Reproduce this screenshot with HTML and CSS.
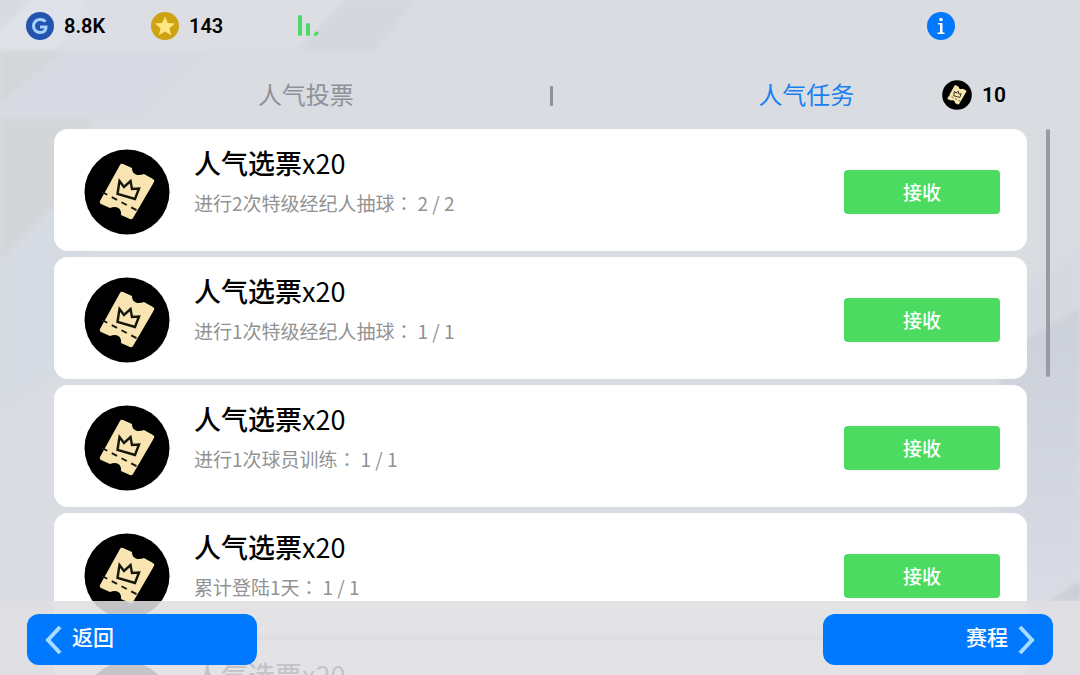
FILE: index.html
```html
<!DOCTYPE html>
<html lang="zh-CN">
<head>
<meta charset="utf-8">
<meta name="viewport" content="width=device-width, initial-scale=1">
<title>人气任务</title>
<link rel="stylesheet" href="styles.css">
</head>
<body>
<svg class="backdrop" viewBox="0 0 1080 675" preserveAspectRatio="none" aria-hidden="true">
  <defs>
    <linearGradient id="shade" x1="0" y1="0" x2="0" y2="1"><stop offset="0" stop-color="#ccd0d8"/><stop offset="1" stop-color="#d9dce4"/></linearGradient>
  </defs>
  <path fill="#e0e2e9" d="M0 0H88L55 50H0Z"/>
  <path fill="#d8dadf" d="M0 0H30L0 30Z"/>
  <path fill="#dcdee4" d="M88 0H345L297 50H55Z"/>
  <path fill="#d4d7dc" d="M345 0H415L375 50H297Z"/>
  <path fill="#d7dae2" d="M0 50H210L140 118H0Z"/>
  <path fill="#d4d6da" d="M0 50H60L0 105Z"/>
  <path fill="#d2d6d9" d="M0 119H90V170L0 260Z"/>
  <path fill="#d6dae2" d="M0 260L90 170V350L0 412Z"/>
  <path fill="#d6d9e0" d="M1080 250L1000 300V353L1080 308Z"/>
  <path fill="url(#shade)" d="M1080 308L1000 353V601H1080Z"/>
  <path fill="#cccfd5" d="M1080 580L1050 601H1080Z"/>
</svg>
<svg class="symbols" aria-hidden="true">
  <symbol id="ticket" viewBox="0 0 86 86">
    <circle cx="43" cy="43" r="42.500" fill="#000"/>
    <path fill="#f9e5b2" d="M39 15L48 19C48 24 52 28 60 25L69 30Q71 31 70 33L49 69Q48 71 46 70L37 66C38 60 33 56 26 59L17 55Q15 54 16 52L36 16Q37 14 39 15Z"/>
    <path fill="none" stroke="#17130d" stroke-width="2.400" d="M33.500 45L35.500 32L40 38L46.500 32L48 40L55 39.500L51 50Z"/>
    <path stroke="#17130d" stroke-width="1.800" stroke-dasharray="6 5" d="M18 43L56 63"/>
  </symbol>
</svg>

<header class="status">
  <div class="currency">
    <svg class="coin" viewBox="0 0 28 28" aria-hidden="true"><circle cx="14" cy="14" r="14" fill="#2354ae"/><path fill="none" stroke="#a8d0ff" stroke-width="3" d="M19.500 9.500Q17.500 7.500 14 7.500A6.500 6.500 0 0 0 14 20.500Q20 20.500 20 15H14"/></svg>
    <span>8.8K</span>
  </div>
  <div class="currency">
    <svg class="coin" viewBox="0 0 28 28" aria-hidden="true"><circle cx="14" cy="14" r="14" fill="#cda313"/><path fill="#ffe680" d="M14 4.500L16.800 11L24 11.600L18.500 16.200L20.200 23.200L14 19.500L7.800 23.200L9.500 16.200L4 11.600L11.200 11Z"/></svg>
    <span>143</span>
  </div>
  <svg class="signal" viewBox="0 0 22 22" role="img" aria-label="信号"><path fill="#4bdb65" d="M0 1.500Q0 0 2 0T4 1.500V20Q2 22 0 20ZM8 9.500Q8 8 10 8T12 9.500V20Q10 22 8 20ZM16 19L18 16.500L21 17L19 20.500L16 21Z"/></svg>
  <button class="info" type="button" aria-label="说明">
    <svg viewBox="0 0 28 28" aria-hidden="true"><circle cx="14" cy="14" r="14" fill="#0079ff"/><circle cx="14" cy="7.500" r="1.800" fill="#fff"/><path fill="#fff" d="M11 11H15.500V20.500H17.500V22H10.500V20.500H13V12.500H11Z"/></svg>
  </button>
</header>

<nav class="tabs">
  <button class="tab" type="button">人气投票</button>
  <span class="divider"></span>
  <button class="tab active" type="button" aria-current="page">人气任务</button>
  <div class="tickets"><svg aria-hidden="true"><use href="#ticket"/></svg><span>10</span></div>
</nav>

<main class="content">
  <ul class="tasks">
    <li class="task"><svg class="reward" aria-hidden="true"><use href="#ticket"/></svg><div class="detail"><h2>人气选票<span class="amount">x20</span></h2><p>进行2次特级经纪人抽球<span class="colon" lang="zh-TW">：</span><span class="progress">2 / 2</span></p></div><button class="claim" type="button">接收</button></li>
    <li class="task"><svg class="reward" aria-hidden="true"><use href="#ticket"/></svg><div class="detail"><h2>人气选票<span class="amount">x20</span></h2><p>进行1次特级经纪人抽球<span class="colon" lang="zh-TW">：</span><span class="progress">1 / 1</span></p></div><button class="claim" type="button">接收</button></li>
    <li class="task"><svg class="reward" aria-hidden="true"><use href="#ticket"/></svg><div class="detail"><h2>人气选票<span class="amount">x20</span></h2><p>进行1次球员训练<span class="colon" lang="zh-TW">：</span><span class="progress">1 / 1</span></p></div><button class="claim" type="button">接收</button></li>
    <li class="task"><svg class="reward" aria-hidden="true"><use href="#ticket"/></svg><div class="detail"><h2>人气选票<span class="amount">x20</span></h2><p>累计登陆1天<span class="colon" lang="zh-TW">：</span><span class="progress">1 / 1</span></p></div><button class="claim" type="button">接收</button></li>
    <li class="task"><svg class="reward" aria-hidden="true"><use href="#ticket"/></svg><div class="detail"><h2>人气选票<span class="amount">x20</span></h2></div></li>
  </ul>
  <div class="scrollbar"><div class="thumb"></div></div>
</main>

<footer class="actions">
  <button class="nav-button" type="button"><svg viewBox="0 0 18 30" aria-hidden="true"><path d="M15 2L3 15L15 28"/></svg><span>返回</span></button>
  <button class="nav-button next" type="button"><span>赛程</span><svg viewBox="0 0 18 30" aria-hidden="true"><path d="M3 2L15 15L3 28"/></svg></button>
</footer>
</body>
</html>
```
FILE: styles.css
```css
* {
  box-sizing: border-box;
}

body {
  position: relative;
  display: flex;
  flex-direction: column;
  height: 100vh;
  margin: 0;
  overflow: hidden;
  background: #d9dce1;
  color: #000;
  font-family: Roboto, "Noto Sans CJK SC", sans-serif;
}

button {
  padding: 0;
  border: 0;
  background: none;
  font: inherit;
  cursor: pointer;
}

.symbols {
  position: absolute;
  width: 0;
  height: 0;
}

.backdrop {
  position: absolute;
  inset: 0;
  z-index: -1;
  width: 100%;
  height: 100%;
  filter: blur(2px);
}

.status {
  display: flex;
  align-items: center;
  height: 51px;
  padding: 0 125px 0 26px;
  font-size: 20px;
  font-weight: 600;
}

.currency {
  display: flex;
  align-items: center;
  gap: 10px;
  width: 125px;
}

.coin,
.info,
.info svg {
  display: block;
  width: 28px;
  height: 28px;
}

.signal {
  width: 22px;
  height: 22px;
  margin-left: 22px;
}

.info {
  margin-left: auto;
}

.tabs {
  position: relative;
  display: flex;
  align-items: center;
  height: 78px;
  padding: 12px 20px 0 62px;
}

.tab {
  flex: 25;
  color: #8e9198;
  font-size: 24px;
  line-height: 36px;
}

.tab.active {
  flex: 26;
  color: #177ff2;
}

.divider {
  width: 3px;
  height: 20px;
  background: #8f9299;
}

.tickets {
  position: absolute;
  top: 29px;
  right: 74px;
  display: flex;
  align-items: center;
  gap: 10px;
  font-size: 21px;
  font-weight: 600;
}

.tickets svg {
  width: 30px;
  height: 30px;
}

.content {
  display: flex;
  flex: 1;
  gap: 19px;
  min-height: 0;
  padding: 0 28px 0 54px;
}

.tasks {
  display: flex;
  flex: 1;
  flex-direction: column;
  gap: 6px;
  margin: 0;
  padding: 0;
  overflow: hidden;
  list-style: none;
}

.task {
  display: flex;
  flex: none;
  align-items: center;
  gap: 24px;
  min-height: 122px;
  padding: 4px 27px 0 30px;
  border-radius: 14px;
  background: #fff;
}

.reward {
  flex: none;
  width: 86px;
  height: 86px;
}

.detail {
  flex: 1;
  align-self: flex-start;
  padding-top: 10px;
  font-family: "Noto Sans CJK SC", sans-serif;
}

.detail h2 {
  margin: 0;
  font-size: 27px;
  font-weight: 500;
  line-height: 40px;
}

.amount {
  font-weight: 400;
}

.detail p {
  margin: 6px 0 0;
  color: #929292;
  font-size: 19px;
  line-height: 28px;
}

.colon {
  font-family: "Noto Sans CJK TC", sans-serif;
}

.progress {
  margin-left: 4px;
}

.claim {
  width: 156px;
  height: 44px;
  padding-bottom: 2px;
  border-radius: 4px;
  background: #4bdb61;
  color: #fff;
  font-size: 19px;
  font-weight: 500;
}

.scrollbar {
  width: 6px;
}

.thumb {
  width: 4px;
  height: 248px;
  border-radius: 2px;
  background: #989ba5;
}

.actions {
  position: absolute;
  right: 0;
  bottom: 0;
  left: 0;
  display: flex;
  justify-content: space-between;
  height: 74px;
  padding: 13px 27px 10px;
  background: rgba(223, 223, 227, 0.88);
}

.nav-button {
  display: flex;
  align-items: center;
  gap: 9px;
  width: 230px;
  padding: 0 18px;
  border-radius: 12px;
  background: #0079ff;
  color: #fff;
  font-size: 21px;
  font-weight: 500;
}

.nav-button.next {
  justify-content: flex-end;
}

.nav-button span {
  padding-bottom: 8px;
}

.nav-button svg {
  width: 18px;
  height: 30px;
  fill: none;
  stroke: #a9dcff;
  stroke-width: 4;
}
```
